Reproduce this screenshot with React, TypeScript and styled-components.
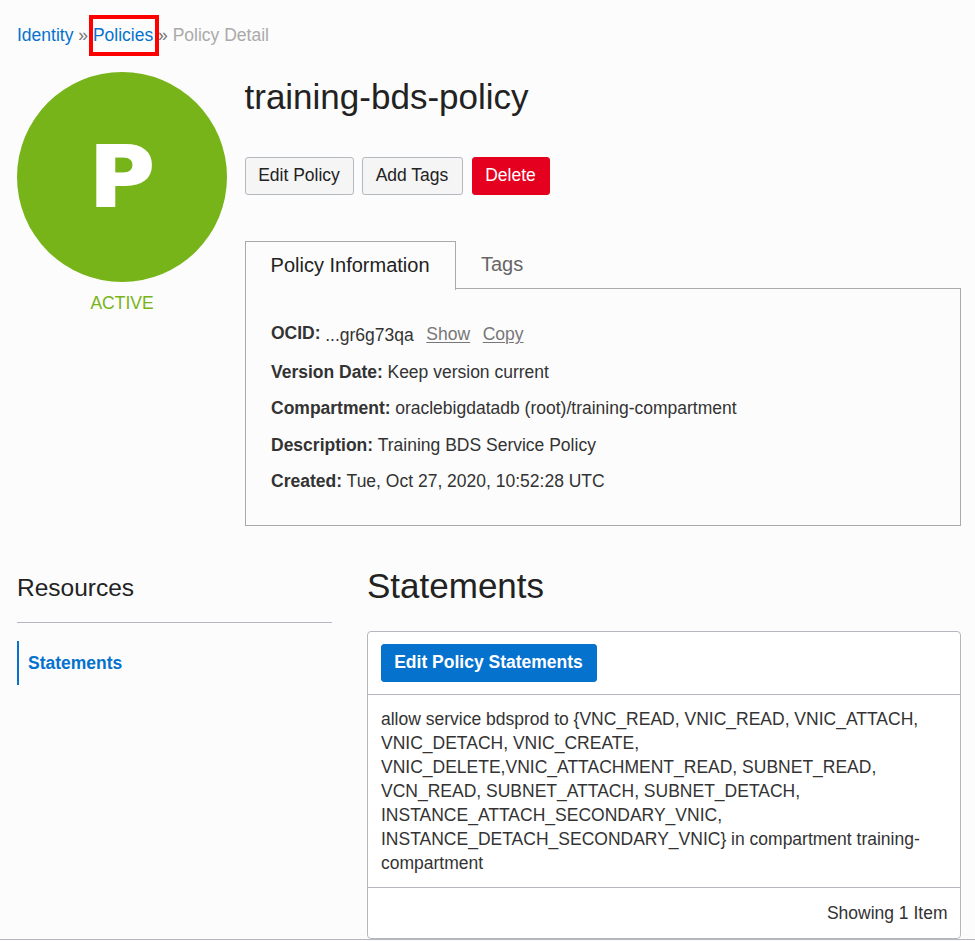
import React from "react";
import styled, { createGlobalStyle, css } from "styled-components";

const GlobalStyle = createGlobalStyle`
  *, *::before, *::after { box-sizing: border-box; }
  body {
    margin: 0;
    background: #fcfcfc;
    color: #333;
    font-family: "Liberation Sans", Arial, sans-serif;
    font-size: 17.5px;
    line-height: 24px;
  }
  h1, h2, h3, p, dl, dd { margin: 0; font-weight: 400; }
`;

const Page = styled.div`
  height: 940px;
  padding: 23px 14px 0 17px;
  border-bottom: 1px solid #b4b8be;
  overflow: hidden;
`;

const Breadcrumb = styled.nav`
  display: flex;
  height: 24px;
  color: #777;
  white-space: pre;
`;

const Link = styled.a`
  color: #0572ce;
  text-decoration: none;
`;

const Highlighted = styled.span`
  position: relative;
  &::after {
    content: "";
    position: absolute;
    top: -8px;
    left: -4px;
    width: 70.5px;
    height: 40.5px;
    border: 4px solid #fe0000;
  }
`;

const Current = styled.span`
  color: #aaa;
`;

const Summary = styled.section`
  display: grid;
  grid-template-columns: 210px 1fr;
  column-gap: 18px;
  margin-top: 25px;
`;

const Status = styled.div`
  display: flex;
  flex-direction: column;
  align-items: center;
  color: #76b417;
  gap: 9px;
`;

const Badge = styled.div`
  display: flex;
  align-items: center;
  justify-content: center;
  width: 210px;
  height: 210px;
  border-radius: 50%;
  background: #77b419;
  color: #fff;
`;

const BadgeLetter = styled.span`
  font: 700 84px/1 "DejaVu Sans", sans-serif;
  -webkit-text-stroke: 2px #fff;
  transform: scaleX(1.06);
`;

const Title = styled.h1`
  height: 50px;
  margin-left: -0.5px;
  color: #222;
  font-size: 35px;
  line-height: 50px;
`;

const Actions = styled.div`
  display: flex;
  margin-top: 35px;
`;

const Button = styled.button<{ $kind?: "danger" | "primary"; $width: number }>`
  width: ${(p) => p.$width}px;
  height: 38px;
  margin: 0 8px 0 0;
  padding: 0 1px 2px 0;
  border: 1px solid #b4b8bf;
  border-radius: 3px;
  background: #f5f5f5;
  color: #222;
  font: 400 17.5px/24px "Liberation Sans", Arial, sans-serif;
  white-space: nowrap;
  ${(p) =>
    p.$kind === "danger" &&
    css`
      margin-left: 1px;
      border-color: #e6001f;
      background: #e6001f;
      color: #fff;
    `}
  ${(p) =>
    p.$kind === "primary" &&
    css`
      border-color: #0572ce;
      background: #0572ce;
      color: #fff;
      font-weight: 700;
    `}
`;

const Tabs = styled.div`
  display: flex;
  height: 47px;
  margin-top: 46px;
`;

const Tab = styled.div<{ $active?: boolean }>`
  height: 47px;
  padding: 11px 25px 0;
  color: #666;
  font-size: 20px;
  ${(p) =>
    p.$active &&
    css`
      position: relative;
      width: 211px;
      height: 49px;
      padding-left: 24.6px;
      border: 1px solid #aaa;
      border-bottom: 0;
      background: #fcfcfc;
      color: #222;
    `}
`;

const InfoPanel = styled.dl`
  display: flex;
  flex-direction: column;
  height: 238px;
  padding: 32px 25px 0;
  border: 1px solid #aaa;
`;

const InfoRow = styled.div<{ $height?: number }>`
  display: flex;
  flex: none;
  height: ${(p) => p.$height ?? 36.6}px;
  gap: 4.6px;
`;

const Label = styled.dt`
  font-weight: 700;
`;

const Value = styled.dd<{ $drop?: number }>`
  padding-top: ${(p) => p.$drop ?? 0}px;
`;

const TextAction = styled.a`
  margin-left: 8px;
  padding-top: 1px;
  color: #777;
  text-decoration: underline;
  text-decoration-thickness: 1px;
  text-underline-offset: 2px;
`;

const Details = styled.section`
  display: grid;
  grid-template-columns: 315px 1fr;
  column-gap: 35px;
  margin-top: 34px;
`;

const ResourcesTitle = styled.h3`
  height: 63px;
  padding-top: 13px;
  border-bottom: 1px solid #b4b8be;
  color: #222;
  font-size: 24.5px;
  line-height: 30px;
`;

const ResourceItem = styled.div`
  height: 44px;
  margin-top: 18px;
  padding: 10px 0 0 9px;
  border-left: 2px solid #0572ce;
  color: #0572ce;
  font-weight: 700;
`;

const SectionTitle = styled.h2`
  height: 71px;
  color: #222;
  font-size: 35px;
  line-height: 52px;
`;

const Table = styled.div`
  height: 308px;
  border: 1px solid #b4b8be;
  border-radius: 4px;
  background: #fff;
`;

const TableHeader = styled.div`
  height: 63px;
  padding: 12px 13px;
  border-bottom: 1px solid #b4b8be;
`;

const Statement = styled.p`
  height: 193px;
  padding: 12px 13px;
  border-bottom: 1px solid #b4b8be;
`;

const TableFooter = styled.div`
  padding: 13px 12.5px;
  text-align: right;
`;

const details = [
  ["Version Date:", "Keep version current"],
  ["Compartment:", "oraclebigdatadb (root)/training-compartment"],
  ["Description:", "Training BDS Service Policy"],
  ["Created:", "Tue, Oct 27, 2020, 10:52:28 UTC"],
];

const statementLines = [
  "allow service bdsprod to {VNC_READ, VNIC_READ, VNIC_ATTACH,",
  "VNIC_DETACH, VNIC_CREATE,",
  "VNIC_DELETE,VNIC_ATTACHMENT_READ, SUBNET_READ,",
  "VCN_READ, SUBNET_ATTACH, SUBNET_DETACH,",
  "INSTANCE_ATTACH_SECONDARY_VNIC,",
  "INSTANCE_DETACH_SECONDARY_VNIC} in compartment training-",
  "compartment",
];

export default function App() {
  return (
    <>
      <GlobalStyle />
      <Page>
        <Breadcrumb>
          <Link>Identity</Link>
          <span> » </span>
          <Highlighted>
            <Link>Policies</Link>
          </Highlighted>
          <span> » </span>
          <Current>Policy Detail</Current>
        </Breadcrumb>

        <Summary>
          <Status>
            <Badge>
              <BadgeLetter>P</BadgeLetter>
            </Badge>
            <span>ACTIVE</span>
          </Status>
          <div>
            <Title>training-bds-policy</Title>
            <Actions>
              <Button $width={109}>Edit Policy</Button>
              <Button $width={101}>Add Tags</Button>
              <Button $width={78} $kind="danger">Delete</Button>
            </Actions>
            <Tabs>
              <Tab $active>Policy Information</Tab>
              <Tab>Tags</Tab>
            </Tabs>
            <InfoPanel>
              <InfoRow $height={38.5}>
                <Label>OCID:</Label>
                <Value $drop={2}>...gr6g73qa</Value>
                <TextAction>Show</TextAction>
                <TextAction>Copy</TextAction>
              </InfoRow>
              {details.map(([label, value]) => (
                <InfoRow key={label}>
                  <Label>{label}</Label>
                  <Value>{value}</Value>
                </InfoRow>
              ))}
            </InfoPanel>
          </div>
        </Summary>

        <Details>
          <div>
            <ResourcesTitle>Resources</ResourcesTitle>
            <ResourceItem>Statements</ResourceItem>
          </div>
          <div>
            <SectionTitle>Statements</SectionTitle>
            <Table>
              <TableHeader>
                <Button $width={216} $kind="primary">Edit Policy Statements</Button>
              </TableHeader>
              <Statement>
                {statementLines.map((line) => (
                  <React.Fragment key={line}>
                    {line}
                    <br />
                  </React.Fragment>
                ))}
              </Statement>
              <TableFooter>Showing 1 Item</TableFooter>
            </Table>
          </div>
        </Details>
      </Page>
    </>
  );
}
